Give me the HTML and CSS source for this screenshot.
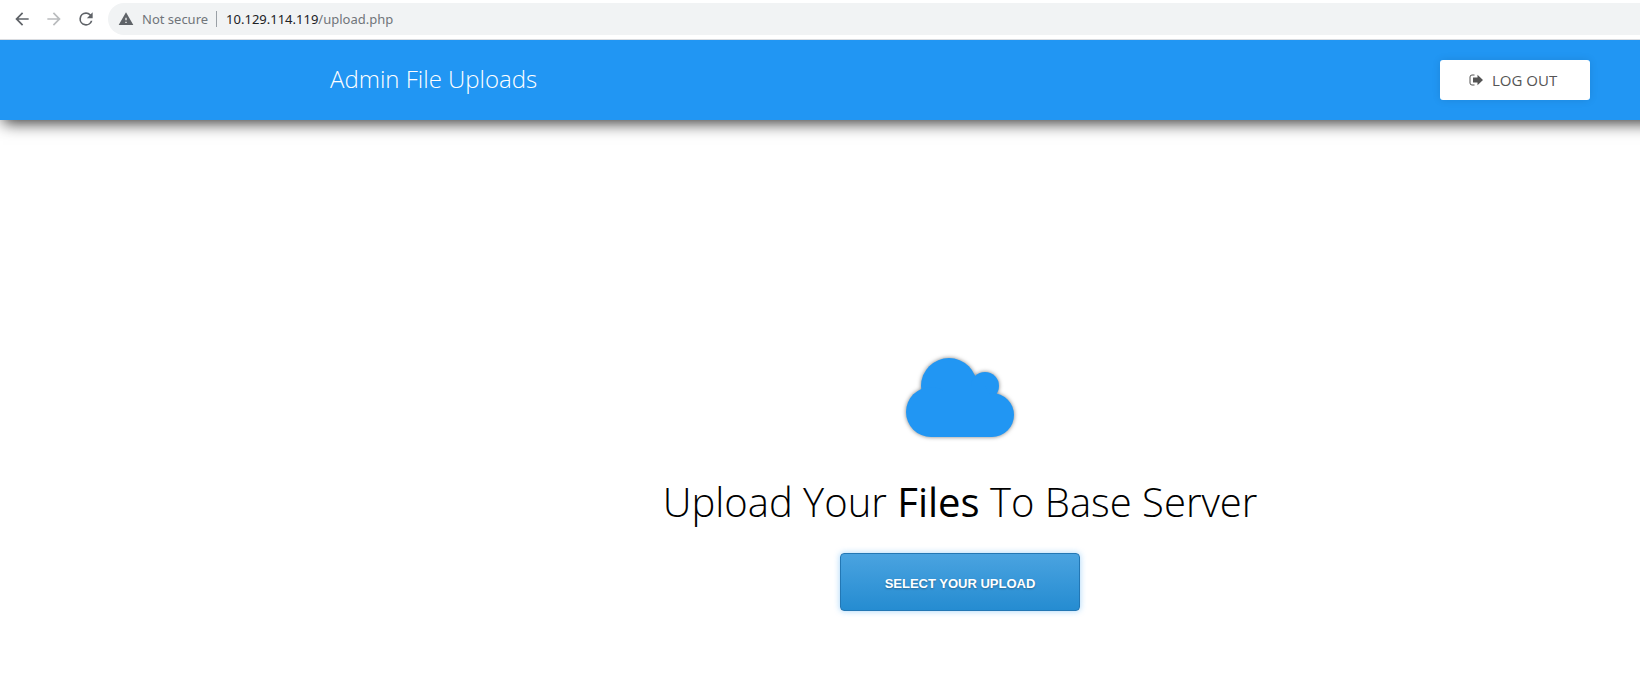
FILE: index.html
```html
<!DOCTYPE html>
<html lang="en">
<head>
<meta charset="utf-8">
<meta name="viewport" content="width=device-width, initial-scale=1">
<title>Admin File Uploads</title>
<link rel="stylesheet" href="styles.css">
</head>
<body>
<div class="toolbar">
  <button class="nav-button" type="button" aria-label="Back">
    <svg class="nav-icon" viewBox="0 0 24 24"><path d="M20 11H7.83l5.59-5.59L12 4l-8 8 8 8 1.41-1.41L7.83 13H20z"/></svg>
  </button>
  <button class="nav-button" type="button" aria-label="Forward" disabled>
    <svg class="nav-icon" viewBox="0 0 24 24"><path d="M12 4l-1.41 1.41L16.17 11H4v2h12.17l-5.58 5.59L12 20l8-8z"/></svg>
  </button>
  <button class="nav-button" type="button" aria-label="Reload">
    <svg class="nav-icon" viewBox="0 0 24 24"><path d="M17.65 6.35A7.96 7.96 0 0 0 12 4a8 8 0 1 0 7.73 10h-2.08A6 6 0 1 1 12 6c1.66 0 3.14.69 4.22 1.78L13 11h7V4z"/></svg>
  </button>
  <div class="address-bar">
    <svg class="warning-icon" viewBox="0 0 24 24"><path d="M1 21h22L12 2zm12-3h-2v-2h2zm0-4h-2v-4h2z"/></svg>
    <span class="security">Not secure</span>
    <span class="url"><span class="host">10.129.114.119</span>/upload.php</span>
  </div>
</div>
<div class="page">
  <header class="site-header">
    <h1 class="site-title">Admin File Uploads</h1>
    <button class="logout" type="button">
      <svg class="logout-icon" viewBox="0 0 14 12"><path class="door" d="M5.500 1H3a2 2 0 0 0-2 2v6a2 2 0 0 0 2 2h2.500"/><path d="M4 3.500h4.500V.7L14 6l-5.500 5.300V8.500H4z"/></svg>
      <span>LOG OUT</span>
    </button>
  </header>
  <main class="upload">
    <svg class="cloud" viewBox="0 0 108 79" aria-hidden="true">
      <circle cx="43" cy="28" r="28"/>
      <circle cx="79" cy="28" r="14"/>
      <circle cx="25" cy="54" r="25"/>
      <circle cx="86" cy="57" r="22"/>
      <path d="M25 40l18-12h36l7 12v39H25z"/>
    </svg>
    <h2 class="upload-title">Upload Your <strong>Files</strong> To Base Server</h2>
    <button class="upload-button" type="button">SELECT YOUR UPLOAD</button>
  </main>
</div>
</body>
</html>
```
FILE: styles.css
```css
* {
  box-sizing: border-box;
}

body {
  margin: 0;
  background: #fff;
  font-family: "Open Sans", sans-serif;
}

button {
  cursor: pointer;
}

.toolbar {
  display: flex;
  align-items: center;
  height: 40px;
  padding: 0 0 2px 12px;
  border-bottom: 1px solid #dadce0;
  font-family: "Noto Sans", sans-serif;
}

.nav-button {
  display: flex;
  margin: 0 12px 0 0;
  padding: 0;
  border: 0;
  background: none;
  color: #5f6368;
}

.nav-button:disabled {
  color: #babcbe;
}

.nav-icon {
  width: 20px;
  height: 20px;
  fill: currentColor;
}

.address-bar {
  display: flex;
  flex: 1;
  align-items: center;
  height: 32px;
  padding-left: 10px;
  border-radius: 16px 0 0 16px;
  background: #f1f3f4;
  color: #70757a;
  font-size: 13px;
}

.warning-icon {
  width: 16px;
  height: 16px;
  fill: #5f6368;
}

.security {
  margin: 0 9px 0 8px;
  padding-right: 8px;
  border-right: 1px solid #9aa0a6;
  line-height: 16px;
}

.host {
  color: #202124;
}

.page {
  overflow: hidden;
}

/* The bar runs past the right edge so its shadow does not fade there. */
.site-header {
  display: flex;
  align-items: center;
  justify-content: space-between;
  height: 80px;
  margin-right: -40px;
  padding: 0 90px 0 330px;
  background: #2196f3;
  box-shadow: 3px 3px 15px rgba(0, 0, 0, 0.8);
}

.site-title {
  margin: 0;
  padding-bottom: 4px;
  color: #fff;
  font-size: 24px;
  font-weight: 300;
}

.logout {
  display: flex;
  align-items: center;
  gap: 9px;
  width: 150px;
  height: 40px;
  padding: 0 0 0 29px;
  border: 0;
  border-radius: 3px;
  background: #fff;
  box-shadow: 0 0 8px rgba(0, 0, 0, 0.1);
  color: #555;
  font-family: inherit;
  font-size: 15px;
}

.logout-icon {
  width: 14px;
  height: 12px;
  fill: currentColor;
}

.door {
  fill: none;
  stroke: currentColor;
}

.upload {
  display: flex;
  flex-direction: column;
  align-items: center;
  padding: 238px 0 83px 280px;
}

.cloud {
  width: 108px;
  height: 79px;
  overflow: visible;
  fill: #2196f3;
  filter: drop-shadow(0 0 2px rgba(0, 0, 0, 0.5));
}

.upload-title {
  margin: 38px 0 24px;
  color: #000;
  font-size: 40px;
  font-weight: 300;
  line-height: 54px;
}

.upload-title strong {
  font-weight: 500;
}

.upload-button {
  width: 240px;
  height: 58px;
  padding: 3px 0 0;
  border: 1px solid #2377b4;
  border-radius: 4px;
  background: linear-gradient(#4aa3e0, #258cd1);
  box-shadow: 0 0 6px rgba(33, 150, 243, 0.4);
  color: #fff;
  font-family: "Liberation Sans", sans-serif;
  font-size: 13px;
  font-weight: 700;
  text-shadow: 0 1px 2px rgba(0, 0, 0, 0.3);
}
```
